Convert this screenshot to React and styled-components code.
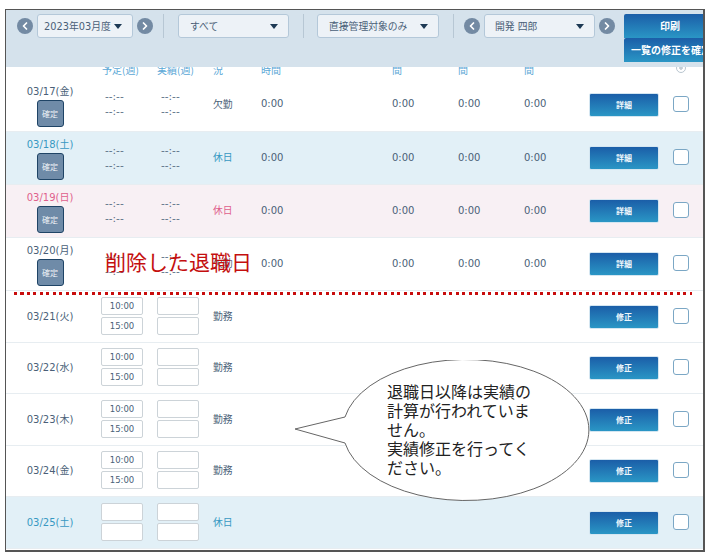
import React from "react";
import styled, {createGlobalStyle} from "styled-components";
import {ChevronLeft, ChevronRight} from "lucide-react";

const GlobalStyle = createGlobalStyle`
    html, body {
        margin: 0;
        background: #fff;
    }
    body {
        font-family: "DejaVu Sans", "Noto Sans CJK JP", sans-serif;
        color: #4a5f78;
    }
`

const Frame = styled.div`
    position: relative;
    box-sizing: border-box;
    width: 700px;
    height: 543px;
    margin: 9px 0 0 5px;
    border: 1px solid #555;
    border-right-width: 2px;
    border-bottom-width: 2px;
    overflow: hidden;
`

const Toolbar = styled.div`
    display: flex;
    align-items: flex-start;
    box-sizing: border-box;
    height: 57px;
    padding: 4px 0 0 11px;
    background: #d5e2ec;
`
const NavButton = styled.div`
    display: flex;
    flex: none;
    align-items: center;
    justify-content: center;
    width: 16px;
    height: 16px;
    margin: 4px 4px 0 0;
    border-radius: 50%;
    background: #738aa3;
    color: #fff;
`
const Select = styled.div`
    display: flex;
    flex: none;
    align-items: center;
    justify-content: space-between;
    box-sizing: border-box;
    width: ${p => p.$width}px;
    height: 24px;
    margin-right: 4px;
    padding: 0 10px 0 ${p => p.$pad}px;
    border: 1px solid #b4c8d9;
    border-radius: 3px;
    background: #edf2f7;
    font-size: 9.8px;
    white-space: nowrap;
`
const Caret = styled.span`
    flex: none;
    width: 0;
    height: 0;
    border-top: 5px solid #1d3954;
    border-right: 4.5px solid transparent;
    border-left: 4.5px solid transparent;
`
const Separator = styled.div`
    flex: none;
    width: 1px;
    height: 24px;
    margin: 0 ${p => p.$right}px 0 ${p => p.$left}px;
    background: #b7c7d4;
`
const ActionColumn = styled.div`
    display: flex;
    flex: none;
    flex-direction: column;
    width: 100px;
    margin-left: 5px;
`
const ActionButton = styled.div`
    box-sizing: border-box;
    height: 24px;
    border-radius: 2px 2px 0 0;
    padding-left: ${p => p.$pad}px;
    background: linear-gradient(#1b5ea8, #2a96c5);
    color: #fff;
    font-family: "Noto Sans CJK JP", sans-serif;
    font-size: 10px;
    font-weight: 700;
    line-height: 24px;
    white-space: nowrap;
`

const HeadRow = styled.div`
    display: grid;
    grid-template-columns: 88px 63px 55px 49px 131px 66px 66px 65px 82px 1fr;
    grid-auto-rows: 10px;
    align-items: end;
    box-sizing: border-box;
    height: 11px;
    padding-bottom: 1px;
    overflow: hidden;
    color: #5aa7d6;
    font-family: "Noto Sans CJK JP", sans-serif;
    font-size: 10px;
    line-height: 14px;
`
const HeadCell = styled.div`
    padding-left: ${p => p.$pad || 0}px;
    white-space: nowrap;
`
const HeadMark = styled.div`
    box-sizing: border-box;
    width: 10px;
    height: 10px;
    margin: 0 0 4px 5px;
    border: 1px solid #b9c6d0;
    border-radius: 50%;
    background: radial-gradient(circle, #c3ced6 0 1.5px, transparent 2px);
`

const toneBack = {plain: "#fff", sat: "#e2f0f7", sun: "#f8f0f4"};
const toneText = {plain: "#4a5f78", sat: "#3798c2", sun: "#df5f8c"};

const Row = styled.div`
    display: grid;
    grid-template-columns: 88px 63px 55px 49px 131px 66px 66px 65px 84px 1fr;
    align-items: center;
    box-sizing: border-box;
    height: ${p => p.$height}px;
    padding-bottom: 2px;
    border-bottom: 1px solid #e7edf1;
    background: ${p => toneBack[p.$tone]};
    color: ${p => toneText[p.$tone]};
    font-size: 10px;
`
const DateCell = styled.div`
    display: flex;
    flex-direction: column;
    align-items: center;
    gap: 1px;
    margin-top: ${p => (p.$fixed ? 4 : 2)}px;
    line-height: 14px;
    white-space: nowrap;
`
const ConfirmButton = styled.div`
    box-sizing: border-box;
    width: 27px;
    height: 27px;
    border: 1px solid #1f4466;
    border-radius: 3px;
    background: #6f8ba8;
    color: #eef2f6;
    font-family: "Noto Sans CJK JP", sans-serif;
    font-size: 8px;
    line-height: 25px;
    text-align: center;
`
const DashCell = styled.div`
    display: flex;
    flex-direction: column;
    gap: 1px;
    padding-left: ${p => p.$pad}px;
    font-size: 10.5px;
    line-height: 14px;
    color: #5b6f86;
`
const InputCell = styled.div`
    display: flex;
    flex-direction: column;
    gap: 2px;
    padding-left: ${p => p.$pad}px;
`
const TimeInput = styled.div`
    box-sizing: border-box;
    width: 42px;
    height: 18px;
    border: 1px solid #ccd3d8;
    border-radius: 2px;
    background: #fff;
    color: #4a5f78;
    font-size: 8.5px;
    line-height: 16px;
    text-align: center;
`
const StatusCell = styled.div`
    padding-left: 1px;
    font-family: "Noto Sans CJK JP", sans-serif;
    font-size: 9.8px;
`
const TimeCell = styled.div`
    color: #4a5f78;
`
const RowButton = styled.div`
    box-sizing: border-box;
    width: 70px;
    height: 24px;
    margin-top: 2px;
    border: 1px solid #d4e6f1;
    border-radius: 2px;
    background: linear-gradient(#1b5ea8, #2a96c5);
    color: #eef6fb;
    font-family: "Noto Sans CJK JP", sans-serif;
    font-size: 8px;
    font-weight: 700;
    line-height: 22px;
    text-align: center;
`
const CheckBox = styled.div`
    box-sizing: border-box;
    width: 16px;
    height: 16px;
    border: 1.5px solid #7ba7c5;
    border-radius: 3px;
    background: #fff;
`

const DeletedLabel = styled.div`
    position: absolute;
    top: 236px;
    left: 99px;
    color: #c40f0f;
    font-family: "Noto Sans CJK JP", sans-serif;
    font-size: 21px;
    line-height: 30px;
    white-space: nowrap;
`
const DottedLine = styled.div`
    position: absolute;
    top: 282px;
    left: 8px;
    width: 678px;
    height: 3px;
    background: repeating-linear-gradient(90deg, #c80d0d 0 3px, transparent 3px 6.5px);
`
const BubbleShape = styled.svg`
    position: absolute;
    top: 350px;
    left: 288px;
`
const BubbleText = styled.div`
    position: absolute;
    top: 372px;
    left: 381px;
    width: 146px;
    color: #222;
    font-family: "Noto Sans CJK JP", sans-serif;
    font-size: 16px;
    line-height: 19px;
`

const rows = [
    {date: "03/17(金)", tone: "plain", status: "欠勤", height: 54, fixed: true},
    {date: "03/18(土)", tone: "sat", status: "休日", height: 53, fixed: true},
    {date: "03/19(日)", tone: "sun", status: "休日", height: 53, fixed: true},
    {date: "03/20(月)", tone: "plain", status: "欠勤", height: 53, fixed: true},
    {date: "03/21(火)", tone: "plain", status: "勤務", height: 52, plan: ["10:00", "15:00"]},
    {date: "03/22(水)", tone: "plain", status: "勤務", height: 51, plan: ["10:00", "15:00"]},
    {date: "03/23(木)", tone: "plain", status: "勤務", height: 52, plan: ["10:00", "15:00"]},
    {date: "03/24(金)", tone: "plain", status: "勤務", height: 51, plan: ["10:00", "15:00"]},
    {date: "03/25(土)", tone: "sat", status: "休日", height: 52, plan: ["", ""]},
];

function Dashes({pad}) {
    return (
        <DashCell $pad={pad}>
            <span>--:--</span>
            <span>--:--</span>
        </DashCell>
    );
}

function Inputs({pad, values}) {
    return (
        <InputCell $pad={pad}>
            <TimeInput>{values[0]}</TimeInput>
            <TimeInput>{values[1]}</TimeInput>
        </InputCell>
    );
}

export default function App() {
    return (
        <Frame>
            <GlobalStyle/>
            <Toolbar>
                <NavButton><ChevronLeft size={12} strokeWidth={3.5}/></NavButton>
                <Select $width={96} $pad={6}>2023年03月度<Caret/></Select>
                <NavButton><ChevronRight size={12} strokeWidth={3.5}/></NavButton>
                <Separator $left={6} $right={14}/>
                <Select $width={111} $pad={11}>すべて<Caret/></Select>
                <Separator $left={10} $right={13}/>
                <Select $width={122} $pad={11}>直接管理対象のみ<Caret/></Select>
                <Separator $left={10} $right={10}/>
                <NavButton><ChevronLeft size={12} strokeWidth={3.5}/></NavButton>
                <Select $width={111} $pad={10}>開発 四郎<Caret/></Select>
                <NavButton><ChevronRight size={12} strokeWidth={3.5}/></NavButton>
                <ActionColumn>
                    <ActionButton $pad={36}>印刷</ActionButton>
                    <ActionButton $pad={7}>一覧の修正を確定</ActionButton>
                </ActionColumn>
            </Toolbar>
            <HeadRow>
                <HeadCell/>
                <HeadCell $pad={8}>予定(週)</HeadCell>
                <HeadCell>実績(週)</HeadCell>
                <HeadCell $pad={1}>況</HeadCell>
                <HeadCell>時間</HeadCell>
                <HeadCell>間</HeadCell>
                <HeadCell>間</HeadCell>
                <HeadCell>間</HeadCell>
                <HeadCell/>
                <HeadMark/>
            </HeadRow>
            {rows.map(row => (
                <Row key={row.date} $tone={row.tone} $height={row.height}>
                    <DateCell $fixed={row.fixed}>
                        {row.date}
                        {row.fixed && <ConfirmButton>確定</ConfirmButton>}
                    </DateCell>
                    {row.fixed ? <Dashes pad={11}/> : <Inputs pad={7} values={row.plan}/>}
                    {row.fixed ? <Dashes pad={4}/> : <Inputs pad={0} values={["", ""]}/>}
                    <StatusCell>{row.status}</StatusCell>
                    {row.fixed ? <TimeCell>0:00</TimeCell> : <span/>}
                    {row.fixed ? <TimeCell>0:00</TimeCell> : <span/>}
                    {row.fixed ? <TimeCell>0:00</TimeCell> : <span/>}
                    {row.fixed ? <TimeCell>0:00</TimeCell> : <span/>}
                    <RowButton>{row.fixed ? "詳細" : "修正"}</RowButton>
                    <CheckBox/>
                </Row>
            ))}
            <DeletedLabel>削除した退職日</DeletedLabel>
            <DottedLine/>
            <BubbleShape width="296" height="144" viewBox="294 360 296 144">
                <path d="M345 417 L295 429 L345 443 A123 70.5 0 1 0 345 417 Z" fill="#fff" stroke="#666" strokeWidth="1"/>
            </BubbleShape>
            <BubbleText>退職日以降は実績の計算が行われていません。<br/>実績修正を行ってください。</BubbleText>
        </Frame>
    );
}
